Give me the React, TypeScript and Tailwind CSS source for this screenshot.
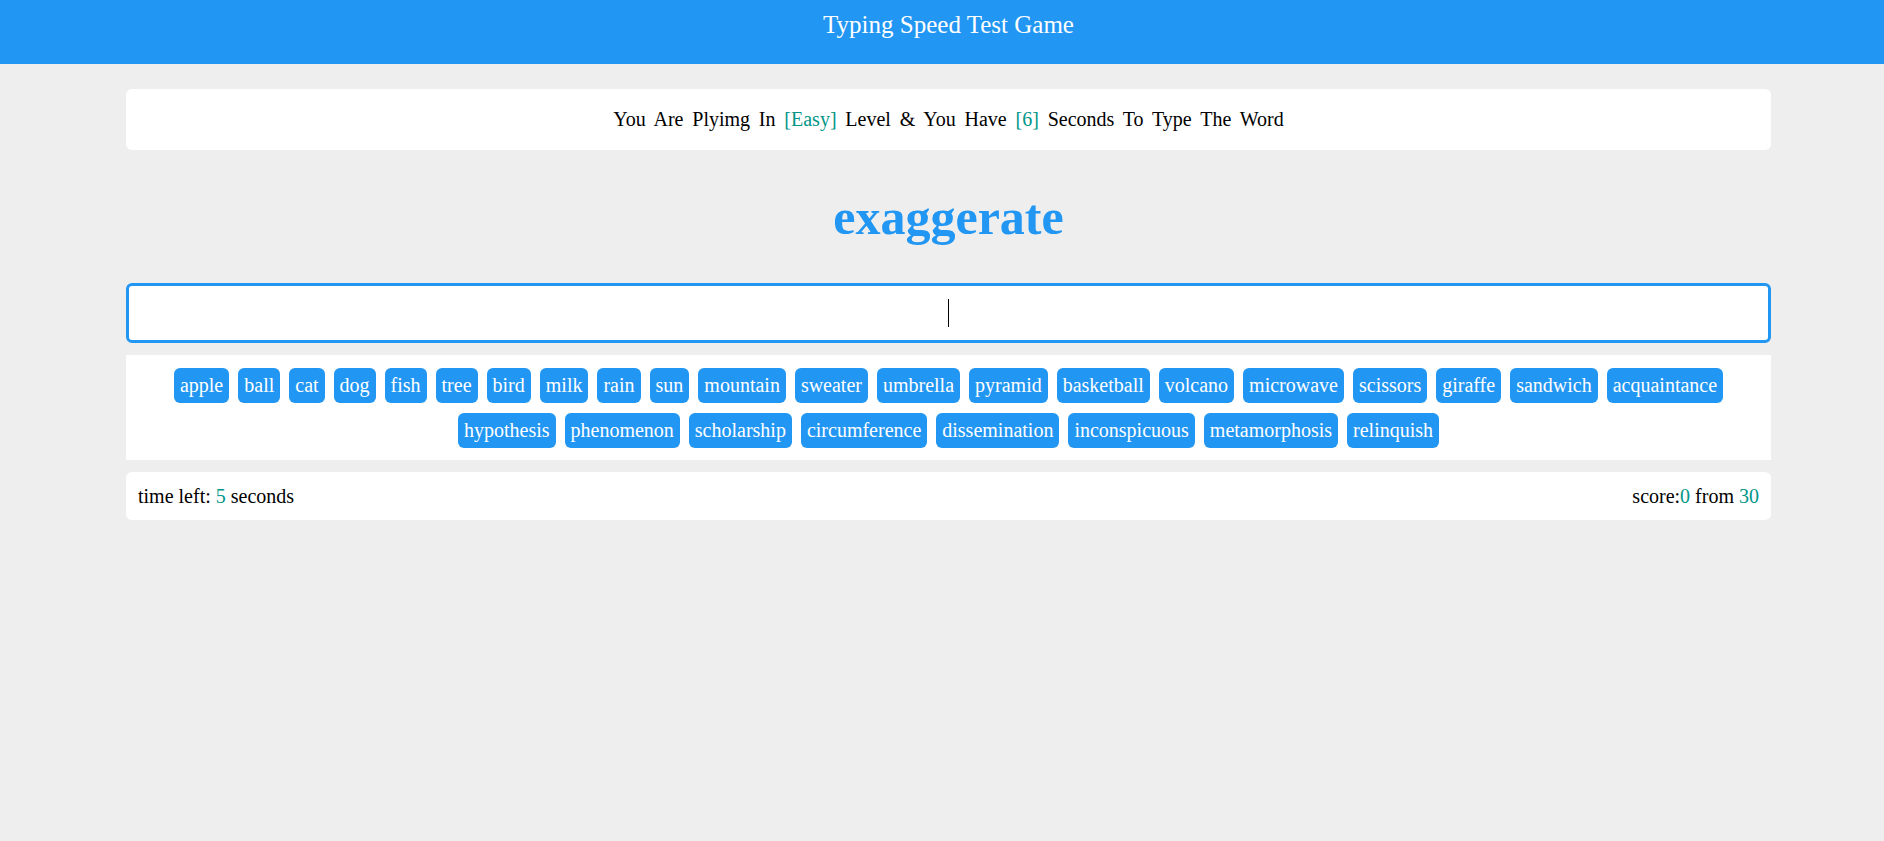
import React from "react";

const WORDS = [
  "apple", "ball", "cat", "dog", "fish", "tree", "bird", "milk", "rain", "sun",
  "mountain", "sweater", "umbrella", "pyramid", "basketball", "volcano", "microwave",
  "scissors", "giraffe", "sandwich", "acquaintance", "hypothesis", "phenomenon",
  "scholarship", "circumference", "dissemination", "inconspicuous", "metamorphosis",
  "relinquish",
];

export default function App() {
  return (
    <div className="min-h-screen bg-[#eeeeee] font-['Liberation_Serif','Times_New_Roman',serif] text-black">
      <header className="h-[64px] bg-[#2196f3] pl-[13px] pt-[11px] text-center text-[25px] leading-[28px] text-white">
        Typing Speed Test Game
      </header>
      <div className="pl-[13px]">
        <main className="mx-auto flex w-[1645px] flex-col">
          <div className="mt-[25px] flex h-[61px] items-center justify-center rounded-[6px] bg-white text-[20px] leading-[23px] [word-spacing:3.8px]">
            <span>
              You Are Plyimg In <span className="text-[#009688]">[Easy]</span> Level &amp; You Have{" "}
              <span className="text-[#009688]">[6]</span> Seconds To Type The Word
            </span>
          </div>
          <div className="mt-[38px] mb-[37px] text-center text-[50px] font-bold leading-[58px] text-[#2196f3]">
            exaggerate
          </div>
          <div className="relative">
            <input
              type="text"
              aria-label="type the word"
              className="block h-[60px] w-full rounded-[6px] border-[3px] border-[#2196f3] bg-white text-center text-[24px] caret-transparent outline-none"
            />
            <span className="pointer-events-none absolute left-[822px] top-[16px] h-[28px] w-px bg-black" />
          </div>
          <div className="mt-[12px] flex flex-wrap justify-center gap-x-[9px] gap-y-[10px] bg-white px-[12px] pt-[13px] pb-[12px]">
            {WORDS.map((w) => (
              <span
                key={w}
                className="rounded-[6px] bg-[#2196f3] px-[6px] py-[6px] text-[20px] leading-[23px] text-white"
              >
                {w}
              </span>
            ))}
          </div>
          <div className="mt-[12px] flex h-[48px] items-center justify-between rounded-[6px] bg-white px-[12px] pt-px text-[20px] leading-[23px]">
            <span>
              time left: <span className="text-[#009688]">5</span> seconds
            </span>
            <span>
              score:<span className="text-[#009688]">0</span> from{" "}
              <span className="text-[#009688]">30</span>
            </span>
          </div>
        </main>
      </div>
    </div>
  );
}
